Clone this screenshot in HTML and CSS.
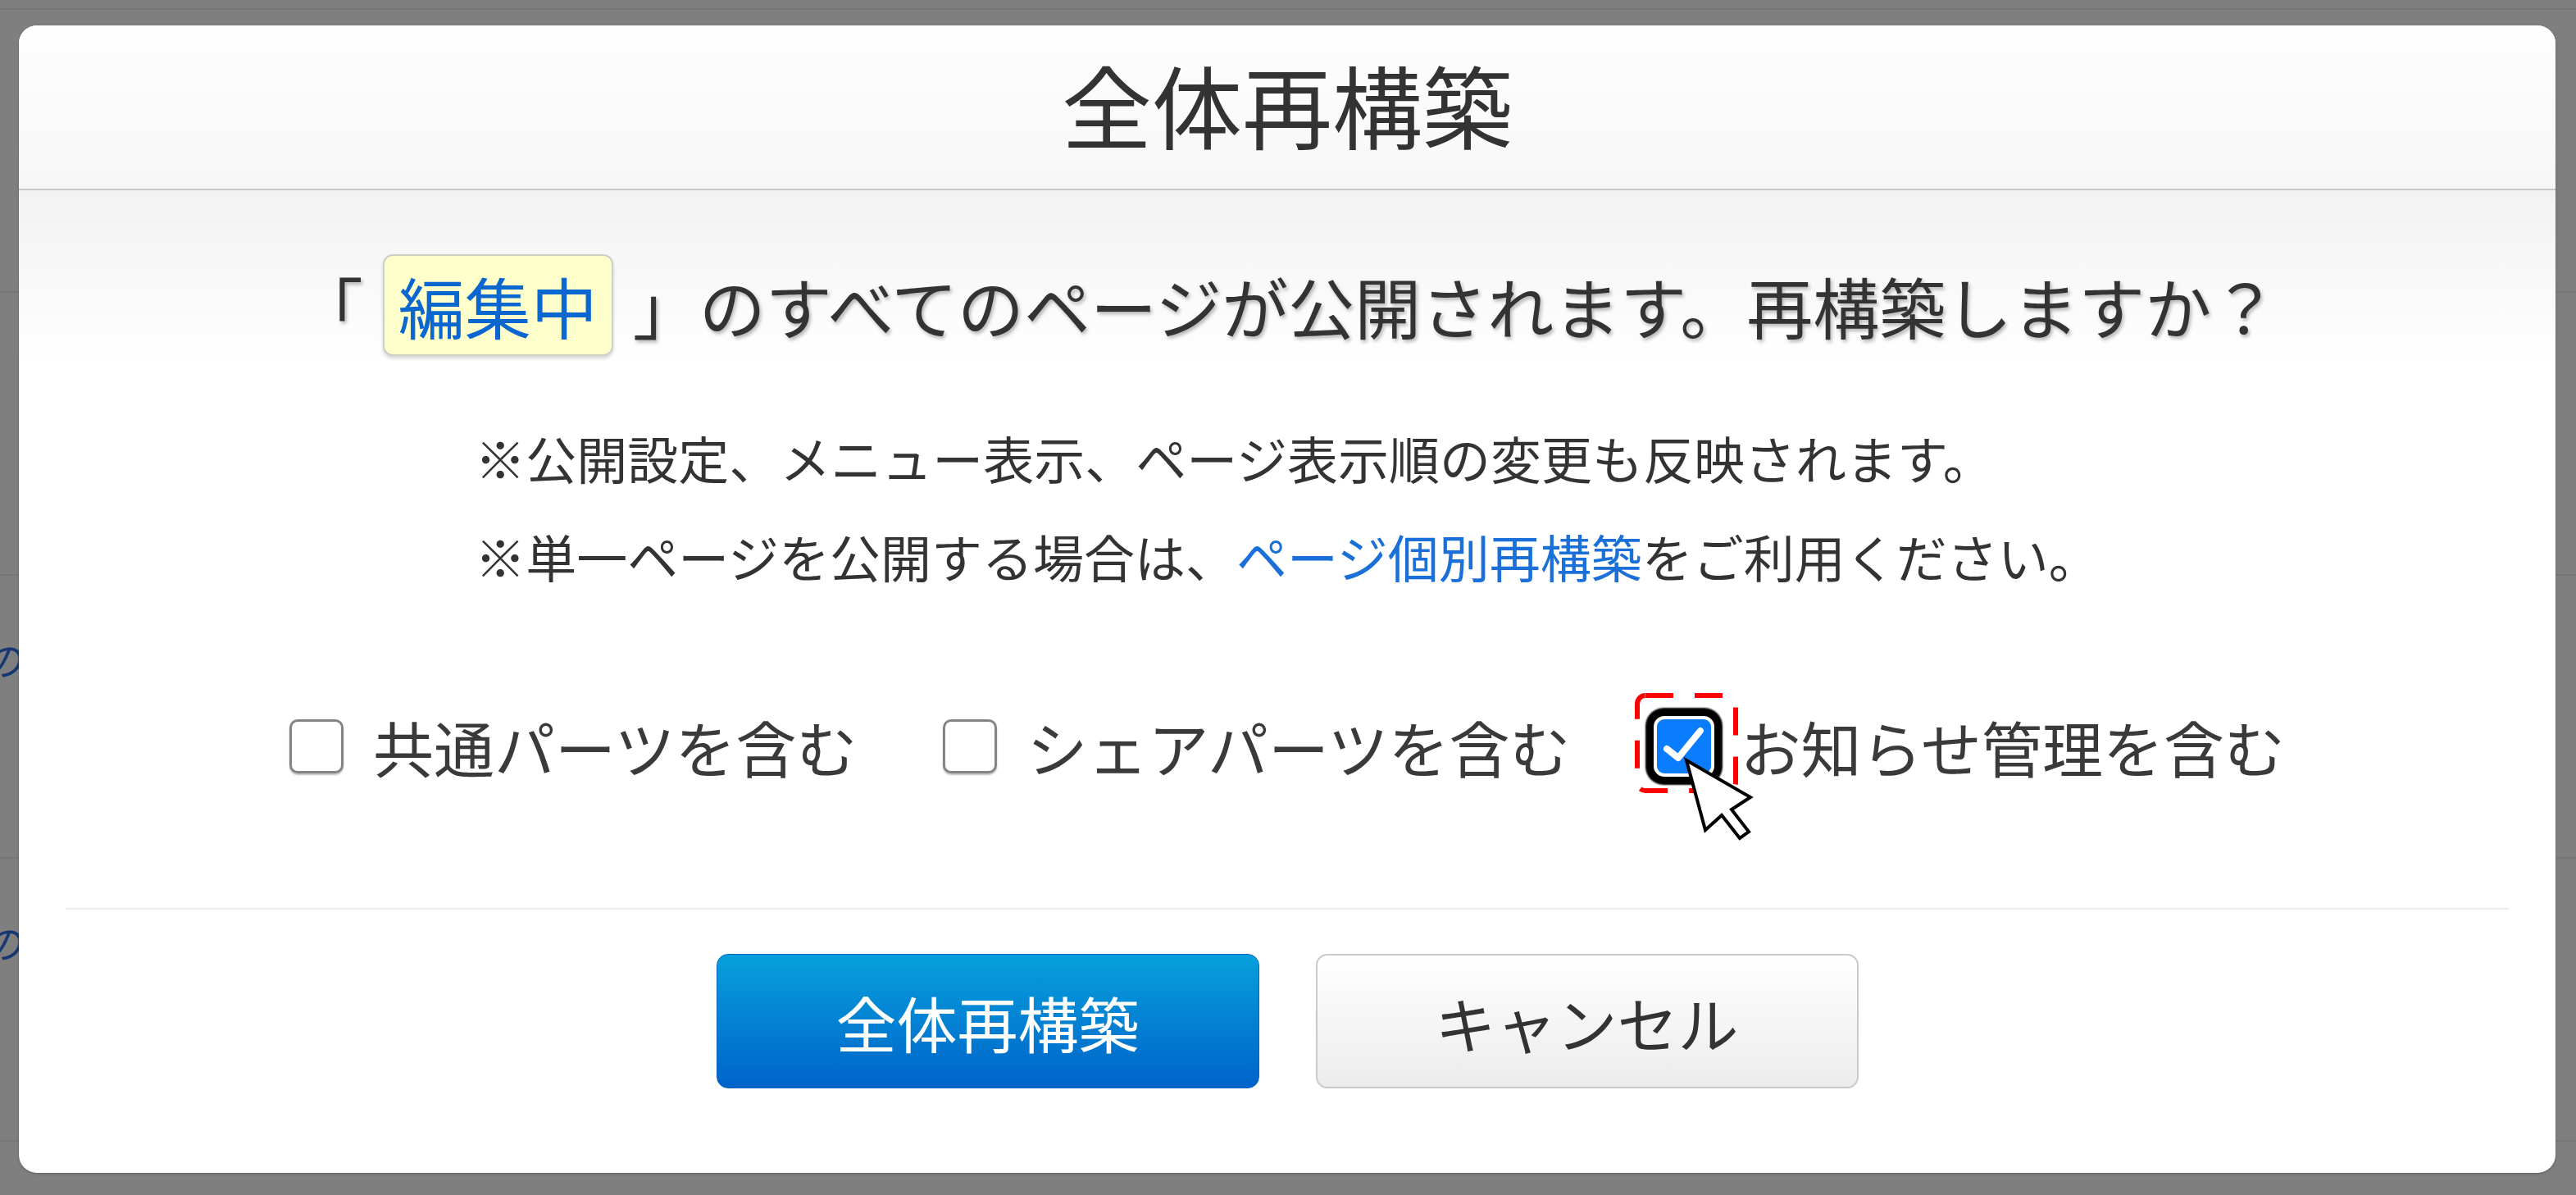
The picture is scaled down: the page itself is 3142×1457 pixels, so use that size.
FILE: index.html
```html
<!DOCTYPE html>
<html lang="ja">
<head>
  <meta charset="UTF-8">
  <title>全体再構築</title>
  <link rel="stylesheet" href="styles.css">
</head>
<body>
  <div class="page">
    <div class="page-row page-row-top"></div>
    <div class="page-row"></div>
    <div class="page-row"></div>
    <div class="page-row"><span class="page-link">の</span></div>
    <div class="page-row"><span class="page-link">の</span></div>
  </div>

  <div class="overlay">
    <div class="dialog">
      <div class="dialog-head">
        <h1>全体再構築</h1>
      </div>

      <div class="dialog-body">
        <p class="message">
          <span>「</span><span class="status">編集中</span><span>」のすべてのページが公開されます。再構築しますか？</span>
        </p>

        <div class="notes">
          <div class="notes-inner">
            <p>※公開設定、メニュー表示、ページ表示順の変更も反映されます。</p>
            <p>※単一ページを公開する場合は、<a href="#">ページ個別再構築</a>をご利用ください。</p>
          </div>
        </div>

        <div class="options">
          <label class="option"><span class="box"></span>共通パーツを含む</label>
          <label class="option"><span class="box"></span>シェアパーツを含む</label>
          <label class="option">
            <span class="box checked">
              <svg class="check" width="66" height="66" viewBox="0 0 66 66">
                <path d="M12 36 L26 47 L53 14" fill="none" stroke="#fff" stroke-width="8" stroke-linecap="round" stroke-linejoin="round"/>
              </svg>
              <svg class="focus-mark" width="126" height="122" viewBox="0 0 126 122">
                <rect x="3" y="3" width="120" height="116" rx="10" fill="none" stroke="#f00" stroke-width="6" stroke-dasharray="34 26"/>
              </svg>
              <svg class="cursor" width="90" height="106" viewBox="0 0 90 106">
                <path d="M4 4 L27 89 L47 71 L69 99 L80 91 L59 64 L82 49 Z" fill="#fff" stroke="#000" stroke-width="4" stroke-linejoin="miter"/>
              </svg>
            </span>お知らせ管理を含む
          </label>
        </div>
      </div>

      <div class="dialog-foot">
        <button class="btn btn-primary">全体再構築</button>
        <button class="btn btn-cancel">キャンセル</button>
      </div>
    </div>
  </div>
</body>
</html>
```

FILE: styles.css
```css
* {
  box-sizing: border-box;
}

body {
  margin: 0;
  width: 3142px;
  height: 1457px;
  overflow: hidden;
  position: relative;
  font-family: "Noto Sans CJK JP", "Noto Sans", sans-serif;
}

/* ページ本体（オーバーレイの下） */
.page {
  background: #fff;
  height: 100%;
}

.page-row {
  height: 345px;
  border-bottom: 2px solid #ececec;
}

.page-row-top {
  height: 12px;
}

.page-link {
  display: block;
  padding-top: 66px;
  margin-left: -22px;
  font-size: 48px;
  font-style: italic;
  color: #2f6fe6;
}

/* モーダル */
.overlay {
  position: absolute;
  top: 0;
  left: 0;
  right: 0;
  bottom: 0;
  background: rgba(0, 0, 0, 0.5);
  padding: 31px 25px 27px 23px;
}

.dialog {
  background: #fff;
  border-radius: 22px;
  overflow: hidden;
  height: 100%;
  box-shadow: 0 1px 3px rgba(0, 0, 0, 0.25);
}

.dialog-head {
  padding: 38px 0 47px;
  background: linear-gradient(#fefefe, #f7f7f7);
  border-bottom: 2px solid #c8c8c8;
  text-align: center;
}

.dialog-head h1 {
  margin: 0;
  font-size: 110px;
  font-weight: normal;
  line-height: 114px;
  color: #333;
}

.dialog-body {
  padding: 78px 57px 0;
  background: linear-gradient(#f2f2f2, #fff 210px);
}

.message {
  margin: 0;
  display: flex;
  justify-content: center;
  align-items: center;
  font-size: 81px;
  line-height: 96px;
  color: #333;
  text-shadow: 2px 3px 4px rgba(0, 0, 0, 0.28);
}

.status {
  margin: 0 24px;
  padding: 12px 17px;
  border: 2px solid #cfcfc2;
  border-radius: 12px;
  background: #ffffcc;
  color: #0b67d0;
  text-shadow: none;
  box-shadow: 0 3px 4px rgba(0, 0, 0, 0.16);
}

.notes {
  margin-top: 64px;
  text-align: center;
}

.notes-inner {
  display: inline-block;
  text-align: left;
  font-size: 62px;
  line-height: 120px;
  color: #333;
}

.notes-inner p {
  margin: 0;
}

.notes-inner a {
  color: #1a6fd8;
  text-decoration: none;
}

.options {
  margin-top: 127px;
  display: flex;
  justify-content: center;
  gap: 105px;
  font-size: 74px;
  line-height: 89px;
  color: #3a3a3a;
}

.option {
  display: flex;
  align-items: center;
  gap: 36px;
}

.box {
  position: relative;
  width: 66px;
  height: 66px;
  flex: none;
  border: 3px solid #858585;
  border-radius: 10px;
  background: #fff;
  box-shadow: 0 2px 2px rgba(0, 0, 0, 0.25);
}

.box.checked {
  border: none;
  border-radius: 9px;
  background: #0a7dff;
  box-shadow: 0 0 0 4px #fff, 0 0 2px 14px #000;
}

.check {
  display: block;
}

.focus-mark {
  position: absolute;
  left: -27px;
  top: -32px;
}

.cursor {
  position: absolute;
  left: 32px;
  top: 46px;
}

.dialog-foot {
  margin: 153px 57px 0;
  border-top: 2px solid #eee;
  padding: 54px 0 103px;
  display: flex;
  justify-content: center;
  gap: 69px;
}

.btn {
  width: 662px;
  height: 164px;
  border-radius: 14px;
  font-family: inherit;
  font-size: 74px;
  cursor: pointer;
}

.btn-primary {
  background: linear-gradient(#07a0dc, #0063ca);
  border: 1px solid #0a62c0;
  color: #fff;
}

.btn-cancel {
  background: linear-gradient(#fff, #ececec);
  border: 2px solid #cacaca;
  color: #333;
}
```
